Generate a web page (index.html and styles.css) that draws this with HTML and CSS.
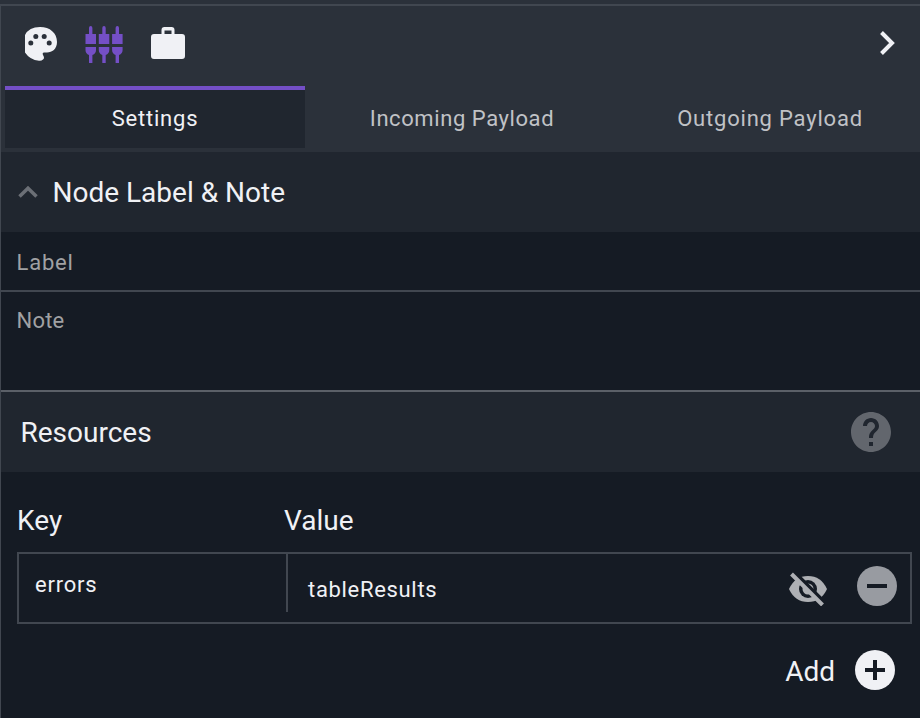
FILE: index.html
```html
<!DOCTYPE html>
<html lang="en">
<head>
<meta charset="utf-8">
<title>Node settings</title>
<link rel="stylesheet" href="styles.css">
</head>
<body>
<main class="panel">
  <header class="toolbar">
    <svg class="icon palette" viewBox="0 0 32 34"><path d="M0 8Q4 0 15 0c10 0 17 6 17 15 0 7-5 10.500-10 10.500h-3q-2 0-1 2.500 2 3 0 4.500-1.500 1.500-4 1.200Q5 33 0 25.500z"/><g class="dots"><circle cx="5.800" cy="16" r="2.500"/><circle cx="10.800" cy="9.400" r="2.500"/><circle cx="19.200" cy="9.400" r="2.500"/><circle cx="24.200" cy="16" r="2.500"/></g></svg>
    <svg class="icon sliders" viewBox="0 0 40 38"><g id="plug"><path d="M4 8V2q0-2 1.700-2t1.700 2v6H11v10H.5V8zM.5 21H11v3q0 3.500-3.600 5v8H4v-8Q.5 27.500.5 24z"/></g><use href="#plug" x="13.300"/><use href="#plug" x="26.600"/></svg>
    <svg class="icon case" viewBox="0 0 34 32"><path fill-rule="evenodd" d="M10.500 7V3q0-3 3-3h7q3 0 3 3v4H31q3 0 3 3v19q0 3-3 3H3q-3 0-3-3V10q0-3 3-3zM13.500 3.500V7h7V3.500z"/></svg>
    <svg class="icon next" viewBox="0 0 16 24"><path d="M2.500 1.500 13 12 2.500 22.500"/></svg>
  </header>
  <nav class="tabs">
    <div class="tab active">Settings</div>
    <div class="tab incoming">Incoming Payload</div>
    <div class="tab">Outgoing Payload</div>
  </nav>
  <section class="bar">
    <svg class="icon fold" viewBox="0 0 20 12"><path d="M1.500 10.500 10 2.200l8.500 8.300"/></svg>
    <h2>Node Label &amp; Note</h2>
  </section>
  <div class="field label">Label</div>
  <div class="field note">Note</div>
  <section class="bar resources">
    <h2>Resources</h2>
    <svg class="icon help" viewBox="2 2 20 20"><path d="M12 2C6.480 2 2 6.480 2 12s4.480 10 10 10 10-4.480 10-10S17.520 2 12 2zm1 17h-2v-2h2v2zm2.070-7.750l-.9.920C13.450 12.900 13 13.500 13 15h-2v-.5c0-1.100.45-2.100 1.170-2.830l1.240-1.260c.37-.36.59-.86.59-1.410 0-1.100-.9-2-2-2s-2 .9-2 2H8c0-2.210 1.790-4 4-4s4 1.790 4 4c0 .88-.36 1.680-.93 2.250z"/></svg>
  </section>
  <section class="table">
    <div class="heads"><span>Key</span><span>Value</span></div>
    <div class="row">
      <div class="key">errors</div>
      <div class="value">tableResults</div>
      <svg class="icon eye" viewBox="0 0 40 34">
        <path d="M1 17Q7 4 20 4t19 13q-6 13-19 13T1 17z"/>
        <circle class="hole" cx="20" cy="17" r="9"/><circle cx="20" cy="17" r="5.500"/>
        <path class="gap" d="M5.500-.5 36.500 30.500"/><path class="slash" d="M3.500 2 34.500 33"/>
      </svg>
      <svg class="icon minus" viewBox="0 0 40 40"><circle cx="20" cy="20" r="20"/><path d="M10 20h20"/></svg>
    </div>
    <div class="add"><span>Add</span><svg class="icon plus" viewBox="0 0 40 40"><circle cx="20" cy="20" r="20"/><path d="M10 20h20M20 10v20"/></svg></div>
  </section>
</main>
</body>
</html>
```
FILE: styles.css
```css
* { box-sizing: border-box; }
body { margin: 0; padding-top: 4px; height: 718px; overflow: hidden; background: #2b313a; color: #f0f1f5; font: 22px/30px Roboto, sans-serif; letter-spacing: .8px; }
.panel { height: 714px; border-top: 2px solid #414750; border-left: 1px solid #414750; background: #151b24; }
.icon { display: block; flex: none; fill: #f0f1f5; }
.toolbar { height: 80px; display: flex; align-items: flex-start; padding: 21px 25px 0 24px; background: #2b313a; }
.palette { width: 32px; height: 34px; }
.dots { fill: #2b313a; }
.sliders { width: 40px; height: 38px; margin: -1px 0 0 28px; fill: #744fc6; }
.case { width: 34px; height: 32px; margin-left: 26px; }
.next { width: 16px; height: 24px; margin: 4px 0 0 auto; fill: none; stroke: #f0f1f5; stroke-width: 4; }
.tabs { height: 66px; display: grid; grid-template-columns: 300px 300px 302px; padding: 0 0 4px 4px; column-gap: 7px; background: #2b313a; }
.tab { padding-top: 18px; text-align: center; color: #c0c2c6; }
.active { border-top: 4px solid #744fc6; padding-top: 14px; background: #20262f; color: #f0f1f5; }
.incoming { letter-spacing: .58px; }
.bar { height: 80px; display: flex; align-items: center; padding-left: 17px; background: #20262f; }
h2, .heads, .add { font: 400 28px/36px Roboto, sans-serif; letter-spacing: 0; }
h2 { margin: 0 0 0 14.5px; padding-top: 2px; }
.fold { width: 20px; height: 12px; fill: none; stroke: #6b6f76; stroke-width: 3.500; }
.field { padding: 16px 15.5px; color: #a0a1a3; }
.label { height: 60px; border-bottom: 2px solid #414750; }
.note { height: 100px; padding-top: 14px; letter-spacing: .2px; border-bottom: 2px solid #5b6068; }
.resources { padding: 0 29px 0 19.5px; justify-content: space-between; }
.resources h2 { margin: 0; }
.help { width: 40px; height: 40px; fill: #62666d; }
.table { padding: 31px 8px 0 16px; }
.heads { display: grid; grid-template-columns: 267px 1fr; height: 49px; }
.row { display: flex; align-items: flex-start; height: 72px; border: 2px solid #414750; padding-right: 13px; }
.key { width: 267px; padding: 16px 16px; }
.value { flex: 1; height: 58px; border-left: 2px solid #414750; padding: 21px 20px; letter-spacing: .68px; }
.eye { width: 40px; height: 34px; margin: 18px 29px 0 0; fill: #aeb0b4; }
.hole { fill: #151b24; }
.gap, .slash { stroke: #151b24; stroke-width: 4; }
.slash { stroke: #aeb0b4; }
.minus { width: 40px; height: 40px; margin-top: 12px; fill: #989ba1; }
.minus path, .plus path { stroke: #151b24; stroke-width: 4; }
.add { display: flex; justify-content: flex-end; align-items: center; gap: 20px; margin-top: 26px; padding-right: 17px; }
.add span { padding-top: 4px; }
.plus { width: 40px; height: 40px; }
```
